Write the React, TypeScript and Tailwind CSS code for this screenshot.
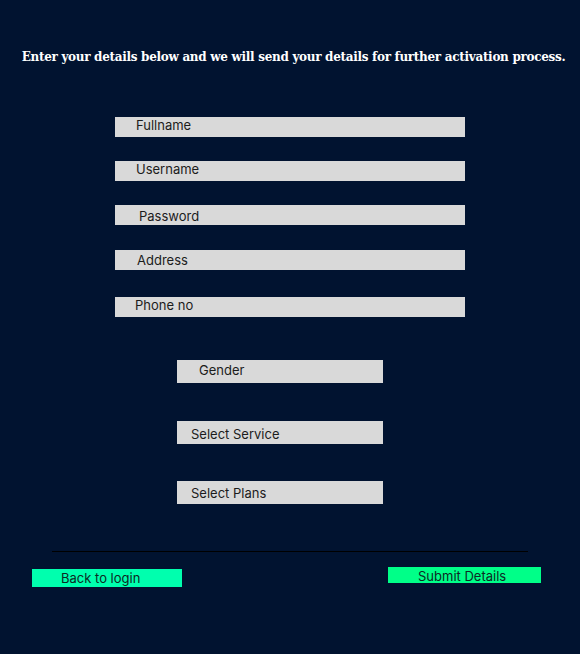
import React from "react";

const fields = [
  { label: "Fullname", cls: "pl-[21px] mt-0 leading-[16px]" },
  { label: "Username", cls: "pl-[21px] mt-[24px] leading-[16px]" },
  { label: "Password", cls: "pl-[24px] mt-[24px] leading-[22px]" },
  { label: "Address", cls: "pl-[22px] mt-[25px] leading-[20px]" },
  { label: "Phone no", cls: "pl-[20px] mt-[27px] leading-[16px]" },
];

const selects = [
  { label: "Gender", cls: "pl-[22px] mt-[43px] leading-[21px]" },
  { label: "Select Service", cls: "pl-[14px] mt-[38px] leading-[26px]" },
  { label: "Select Plans", cls: "pl-[14px] mt-[37px] leading-[25px]" },
];

const App: React.FC = () => {
  return (
    <div className="w-[580px] h-[654px] bg-[#011330] overflow-hidden font-['Inter',sans-serif]">
      <h1 className="pt-[48px] pl-[7px] text-center whitespace-nowrap text-white font-bold text-[12px] leading-[18px] font-['DejaVu_Serif',serif] tracking-[-0.3px]">
        Enter your details below and we will send your details for further activation process.
      </h1>

      <div className="flex flex-col items-center mt-[51px]">
        {fields.map((f) => (
          <div
            key={f.label}
            className={`w-[350px] h-[20px] bg-[#d9d9d9] text-[13px] text-[#1c1c1c] ${f.cls}`}
          >
            {f.label}
          </div>
        ))}
      </div>

      <div className="flex flex-col pl-[177px]">
        {selects.map((s) => (
          <div
            key={s.label}
            className={`w-[206px] h-[23px] bg-[#d9d9d9] text-[13px] text-[#1c1c1c] ${s.cls}`}
          >
            {s.label}
          </div>
        ))}
      </div>

      <div className="mx-[52px] mt-[47px] h-px bg-black" />

      <div className="flex justify-between items-start pl-[32px] pr-[39px] mt-[15px]">
        <button className="mt-[2px] w-[150px] h-[18px] bg-[#00ffae] pl-[29px] text-left text-[13px] leading-[18px] text-[#0d2a24]">
          Back to login
        </button>
        <button className="w-[153px] h-[16px] bg-[#00ff88] pl-[30px] text-left text-[13px] leading-[18px] text-[#0d2a24]">
          Submit Details
        </button>
      </div>
    </div>
  );
};

export default App;
